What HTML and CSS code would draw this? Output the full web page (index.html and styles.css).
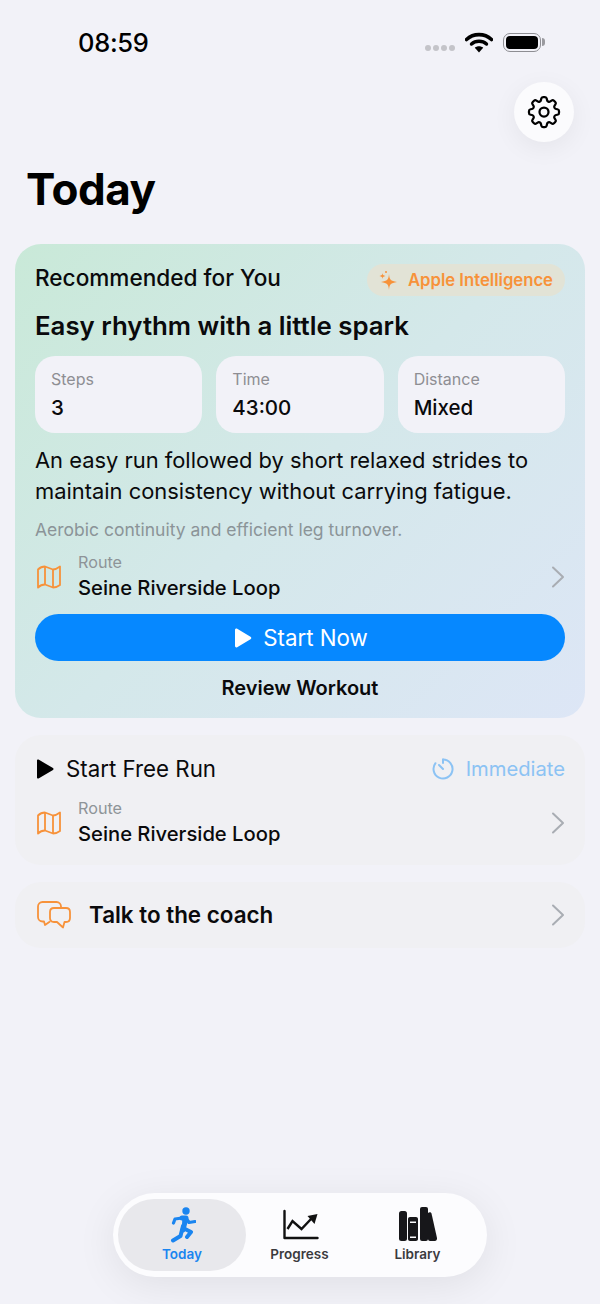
FILE: index.html
```html
<!DOCTYPE html>
<html lang="en">
<head>
  <meta charset="UTF-8" />
  <meta name="viewport" content="width=device-width, initial-scale=1.0" />
  <title>Today</title>
  <link rel="stylesheet" href="styles.css">
</head>
<body>
  <div class="status-bar">
    <span class="clock">08:59</span>
    <div class="status-icons">
      <div class="signal"><i></i><i></i><i></i><i></i></div>
      <svg class="wifi" width="28" height="21" viewBox="0 0 28 21">
        <path d="M1.5 7.5C8.5 1 19.5 1 26.5 7.5" fill="none" stroke="#000" stroke-width="3.6" stroke-linecap="round"/>
        <path d="M6.5 12C10.5 8.4 17.5 8.4 21.5 12" fill="none" stroke="#000" stroke-width="3.4" stroke-linecap="round"/>
        <path d="M14 20.5L9.8 15.8C12 13.8 16 13.8 18.2 15.8Z"/>
      </svg>
      <div class="battery"><div class="battery-fill"></div></div>
      <div class="battery-cap"></div>
    </div>
  </div>

  <div class="top-actions">
    <button class="settings-btn" type="button">
      <svg width="40" height="40" viewBox="0 0 24 24" fill="none" stroke="#000" stroke-width="1.35" stroke-linejoin="round">
        <path d="M10.343 3.94c.09-.542.56-.94 1.11-.94h1.093c.55 0 1.02.398 1.11.94l.149.894c.07.424.384.764.78.93.398.164.855.142 1.205-.108l.737-.527a1.125 1.125 0 0 1 1.45.12l.773.774c.39.389.44 1.002.12 1.45l-.527.737c-.25.35-.272.806-.107 1.204.165.397.505.71.93.78l.893.15c.543.09.94.559.94 1.109v1.094c0 .55-.397 1.02-.94 1.11l-.894.149c-.424.07-.764.383-.929.78-.165.398-.143.854.107 1.204l.527.738c.32.447.269 1.06-.12 1.45l-.774.773a1.125 1.125 0 0 1-1.449.12l-.738-.527c-.35-.25-.806-.272-1.203-.107-.398.165-.71.505-.781.929l-.149.894c-.09.542-.56.94-1.11.94h-1.094c-.55 0-1.019-.398-1.11-.94l-.148-.894c-.071-.424-.384-.764-.781-.93-.398-.164-.854-.142-1.204.108l-.738.527c-.447.32-1.06.269-1.45-.12l-.773-.774a1.125 1.125 0 0 1-.12-1.45l.527-.737c.25-.35.272-.806.108-1.204-.165-.397-.506-.71-.93-.78l-.894-.15c-.542-.09-.94-.56-.94-1.11v-1.094c0-.55.398-1.02.94-1.11l.894-.149c.424-.07.765-.383.93-.78.165-.398.143-.854-.108-1.204l-.526-.738a1.125 1.125 0 0 1 .12-1.45l.773-.773a1.125 1.125 0 0 1 1.45-.12l.737.527c.35.25.807.272 1.204.107.397-.165.71-.505.78-.929l.15-.894Z"/>
        <circle cx="12" cy="12" r="2.7"/>
      </svg>
    </button>
  </div>

  <h1>Today</h1>

  <main class="cards">
    <section class="card card-rec">
      <div class="rec-head">
        <h2>Recommended for You</h2>
        <div class="ai-badge">
          <svg width="18" height="20" viewBox="0 0 18 20" fill="#f7923a">
            <path d="M10 4C10.5 9.5 11.5 11 18 12C11.5 13 10.5 14.5 10 20C9.5 14.5 8.5 13 2 12C8.5 11 9.5 9.5 10 4Z"/>
            <path d="M3.5 3C3.7 5 4.2 5.5 6.5 6C4.2 6.5 3.7 7 3.5 9C3.3 7 2.8 6.5 .5 6C2.8 5.5 3.3 5 3.5 3Z"/>
            <circle cx="7" cy="2" r="1"/>
          </svg>
          <span>Apple Intelligence</span>
        </div>
      </div>
      <h3>Easy rhythm with a little spark</h3>
      <div class="stats">
        <div class="stat"><span class="stat-label">Steps</span><span class="stat-value">3</span></div>
        <div class="stat"><span class="stat-label">Time</span><span class="stat-value">43:00</span></div>
        <div class="stat"><span class="stat-label">Distance</span><span class="stat-value">Mixed</span></div>
      </div>
      <p class="desc">An easy run followed by short relaxed strides to maintain consistency without carrying fatigue.</p>
      <p class="focus">Aerobic continuity and efficient leg turnover.</p>
      <div class="route route-rec">
        <svg class="map-icon" width="28" height="26" viewBox="0 0 28 26" fill="none" stroke="#f7923a" stroke-width="1.8" stroke-linejoin="round">
          <path d="M3 5.5C5 3.5 7.5 2.5 10 2.5L18 5.5C20.5 5.5 23 4 25 2.5V21C23 22.5 20.5 23.5 18 23.5L10 20.5C7.5 20.5 5 21.5 3 23.5Z"/>
          <path d="M10 2.5V20.5M18 5.5V23.5"/>
        </svg>
        <div class="route-text">
          <span class="route-label">Route</span>
          <span class="route-name">Seine Riverside Loop</span>
        </div>
        <svg class="chevron" width="14" height="24" viewBox="0 0 14 24" fill="none" stroke="#a9adb3" stroke-width="2" stroke-linecap="round" stroke-linejoin="round"><path d="M2 2.5L12 12L2 21.5"/></svg>
      </div>
      <button class="start-btn" type="button">
        <svg width="18" height="20" viewBox="0 0 18 20" fill="#fff"><path d="M1 2C1 .8 2.2 .2 3.2 .8L16.5 8.7C17.5 9.3 17.5 10.7 16.5 11.3L3.2 19.2C2.2 19.8 1 19.2 1 18Z"/></svg>
        Start Now
      </button>
      <div class="review">Review Workout</div>
    </section>

    <section class="card card-free">
      <div class="free-head">
        <svg class="free-play" width="18" height="20" viewBox="0 0 18 20"><path d="M1 1.5C1 .7 1.8 .2 2.5 .6L17 9C17.7 9.4 17.7 10.6 17 11L2.5 19.4C1.8 19.8 1 19.3 1 18.5Z"/></svg>
        <span class="free-title">Start Free Run</span>
        <div class="immediate">
          <svg width="22" height="22" viewBox="0 0 22 22" fill="none" stroke="#8cc3f4" stroke-width="2" stroke-linecap="round"><path d="M11 1.5A9.5 9.5 0 1 1 3.5 5.2"/><path d="M11 1.5V5M7 7L11 11"/></svg>
          <span>Immediate</span>
        </div>
      </div>
      <div class="route route-free">
        <svg class="map-icon" width="28" height="26" viewBox="0 0 28 26" fill="none" stroke="#f7923a" stroke-width="1.8" stroke-linejoin="round">
          <path d="M3 5.5C5 3.5 7.5 2.5 10 2.5L18 5.5C20.5 5.5 23 4 25 2.5V21C23 22.5 20.5 23.5 18 23.5L10 20.5C7.5 20.5 5 21.5 3 23.5Z"/>
          <path d="M10 2.5V20.5M18 5.5V23.5"/>
        </svg>
        <div class="route-text">
          <span class="route-label">Route</span>
          <span class="route-name">Seine Riverside Loop</span>
        </div>
        <svg class="chevron" width="14" height="24" viewBox="0 0 14 24" fill="none" stroke="#a9adb3" stroke-width="2" stroke-linecap="round" stroke-linejoin="round"><path d="M2 2.5L12 12L2 21.5"/></svg>
      </div>
    </section>

    <section class="card card-coach">
      <svg class="coach-icon" width="34" height="28" viewBox="0 0 34 28" fill="none" stroke="#f7923a" stroke-width="1.8" stroke-linejoin="round">
        <path d="M24 7V5.5C24 3 22 1 19.5 1H5.500C3 1 1 3 1 5.5V16C1 18.5 3 20.5 5.5 20.5H7L8 24L13 20.5"/>
        <path d="M17 7H29C31.5 7 33 8.5 33 11V17C33 19.5 31.5 21 29 21H27.5L26 26.5L20 21H17C14.5 21 13 19.5 13 17V11C13 8.5 14.5 7 17 7Z"/>
      </svg>
      <span class="coach-title">Talk to the coach</span>
      <svg class="coach-chevron" width="14" height="24" viewBox="0 0 14 24" fill="none" stroke="#a9adb3" stroke-width="2" stroke-linecap="round" stroke-linejoin="round"><path d="M2 2.5L12 12L2 21.5"/></svg>
    </section>
  </main>

  <nav class="tab-bar">
    <div class="tab tab-active">
      <svg width="28" height="36" viewBox="0 0 28 36" fill="none" stroke="#1a85f0" stroke-linecap="round" stroke-linejoin="round">
        <circle cx="18" cy="4" r="3.7" fill="#1a85f0" stroke="none"/>
        <path d="M14 11H18L15 23" stroke-width="5" fill="#1a85f0"/>
        <path d="M14 11L7 12L5.5 16M18 11L21 15.5L27 14.5" stroke-width="3.2"/>
        <path d="M15 19L12.5 29L5 33.5M15 21L23 25L19 30" stroke-width="4"/>
      </svg>
      <span>Today</span>
    </div>
    <div class="tab">
      <svg width="38" height="36" viewBox="0 0 38 36" fill="none">
        <path d="M3.5 4V31H36.5" stroke="#111" stroke-width="2.4" stroke-linecap="round" stroke-linejoin="round"/>
        <path d="M6.5 22L11.5 14L20.5 22L30 12" stroke="#111" stroke-width="2.4"/>
        <path d="M26.5 9L36.5 7L33.5 17Z" fill="#111"/>
      </svg>
      <span>Progress</span>
    </div>
    <div class="tab">
      <svg width="38" height="36" viewBox="0 0 38 36" fill="#17171a">
        <rect x="0" y="4" width="8" height="30" rx="2.5"/>
        <path fill-rule="evenodd" d="M9 12C9 10.9 9.9 10 11 10H17C18.1 10 19 10.900 19 12V32C19 33.1 18.1 34 17 34H11C9.9 34 9 33.1 9 32ZM11 14.5V16H17V14.5ZM11 29.5V31H17V29.5Z"/>
        <rect x="21" y="0" width="8" height="34" rx="2"/>
        <path d="M29 6C30 5 32 5 32.5 6.5L38 31C38.3 33 37 34 36 34H31C30 34 29 33 29 32Z"/>
      </svg>
      <span>Library</span>
    </div>
  </nav>
</body>
</html>
```

FILE: styles.css
```css
* {
  box-sizing: border-box;
}

body {
  margin: 0;
  height: 1304px;
  font-family: 'Inter', 'Liberation Sans', sans-serif;
  background-color: #f2f2f8;
  color: #0a0a0c;
  display: flex;
  flex-direction: column;
  overflow: hidden;
}

/* status bar */
.status-bar {
  display: flex;
  justify-content: space-between;
  align-items: center;
  padding: 26px 55px 0 78px;
  height: 58px;
}

.clock {
  font-size: 25.5px;
  font-weight: 500;
  letter-spacing: -0.3px;
  color: #000;
}

.status-icons {
  display: flex;
  align-items: center;
}

.signal {
  display: flex;
  gap: 2px;
  margin: 12px 10px 0 0;
}

.signal i {
  width: 6px;
  height: 6px;
  border-radius: 50%;
  background-color: #c4c4c9;
}

.wifi {
  margin-right: 10px;
}

.battery {
  width: 38px;
  height: 19px;
  border: 1.5px solid #8e8e93;
  border-radius: 7px;
  padding: 2px;
}

.battery-fill {
  height: 100%;
  background-color: #000;
  border-radius: 4px;
}

.battery-cap {
  width: 3px;
  height: 8px;
  margin-left: 1px;
  background-color: #9a9a9f;
  border-radius: 0 3px 3px 0;
}

/* header */
.top-actions {
  display: flex;
  justify-content: flex-end;
  padding: 24px 26px 0 0;
}

.settings-btn {
  width: 60px;
  height: 60px;
  padding: 0;
  border: none;
  border-radius: 50%;
  background-color: #fbfbfd;
  box-shadow: 0 6px 26px rgba(0, 0, 0, 0.06);
  display: flex;
  align-items: center;
  justify-content: center;
}

h1 {
  margin: 19px 0 27px 26px;
  font-size: 44px;
  line-height: 56px;
  font-weight: 700;
  letter-spacing: -0.5px;
  color: #000;
}

/* cards */
.cards {
  display: flex;
  flex-direction: column;
  gap: 17px;
  padding: 0 15px;
}

.card {
  border-radius: 26px;
  background-color: #f0f0f3;
}

.card-rec {
  height: 474px;
  padding: 19px 20px 0;
  background: linear-gradient(135deg, #c9e9d8 0%, #d4e8ea 50%, #dde6f6 100%);
}

.rec-head {
  display: flex;
  justify-content: space-between;
  align-items: center;
  height: 33px;
}

h2 {
  margin: 0 0 4px;
  font-size: 22.6px;
  font-weight: 500;
}

.ai-badge {
  display: flex;
  align-items: center;
  gap: 11px;
  height: 32px;
  padding: 0 12px;
  border-radius: 16px;
  background-color: #e2e3d6;
  color: #f7923a;
  font-size: 16.7px;
  font-weight: 600;
}

h3 {
  margin: 13px 0;
  font-size: 25.8px;
  line-height: 34px;
  font-weight: 600;
}

.stats {
  display: grid;
  grid-template-columns: repeat(3, 1fr);
  gap: 14px;
}

.stat {
  height: 77px;
  padding: 13px 16px 0;
  border-radius: 20px;
  background-color: #f2f2f8;
  display: flex;
  flex-direction: column;
}

.stat-label {
  font-size: 16px;
  line-height: 20px;
  color: #8e8e93;
}

.stat-value {
  margin-top: 6px;
  font-size: 20.5px;
  line-height: 26px;
  font-weight: 500;
}

.desc {
  margin: 12px 0 0;
  font-size: 21.9px;
  line-height: 31px;
}

.focus {
  margin: 12px 0 0;
  font-size: 17.5px;
  line-height: 22px;
  color: #8b9498;
}

.route {
  display: flex;
  align-items: center;
}

.route-rec {
  margin-top: 10px;
  height: 50px;
}

.map-icon {
  margin: 1px 15px 0 0;
  flex-shrink: 0;
}

.chevron {
  margin-top: 1px;
  flex-shrink: 0;
}

.route-text {
  display: flex;
  flex-direction: column;
  flex: 1;
}

.route-label {
  font-size: 16.2px;
  line-height: 20px;
  color: #8e9498;
}

.route-name {
  margin-top: 3px;
  font-size: 20.2px;
  line-height: 25px;
  font-weight: 500;
}

.start-btn {
  width: 100%;
  height: 47px;
  margin-top: 13px;
  padding: 0 0 0 2px;
  border: none;
  border-radius: 24px;
  background-color: #0688ff;
  color: #fff;
  font-family: inherit;
  font-size: 22.3px;
  display: flex;
  align-items: center;
  justify-content: center;
  gap: 11px;
}

.review {
  margin-top: 14px;
  text-align: center;
  font-size: 20px;
  line-height: 26px;
  font-weight: 600;
}

.card-free {
  height: 130px;
  padding: 20px 20px 0;
}

.free-head {
  display: flex;
  align-items: center;
  height: 27px;
}

.free-play {
  margin-left: 1px;
}

.free-title {
  margin-left: 12px;
  flex: 1;
  font-size: 22.3px;
}

.immediate {
  display: flex;
  align-items: center;
  gap: 12px;
  font-size: 20.2px;
  color: #8cc3f4;
}

.route-free {
  margin-top: 15px;
  height: 50px;
}

.card-coach {
  height: 66px;
  padding: 0 20px;
  display: flex;
  align-items: center;
}

.coach-icon {
  margin-left: 2px;
  flex-shrink: 0;
}

.coach-title {
  margin: 0 0 2px 18px;
  flex: 1;
  font-size: 22.4px;
  font-weight: 600;
}

.coach-chevron {
  flex-shrink: 0;
}

/* tab bar */
.tab-bar {
  margin: auto auto 27px;
  width: 374px;
  height: 84px;
  padding: 6px 5px;
  border-radius: 42px;
  background-color: #fcfcfe;
  box-shadow: 0 8px 40px rgba(0, 0, 0, 0.08);
  display: grid;
  grid-template-columns: 128px 107px 129px;
}

.tab {
  display: flex;
  flex-direction: column;
  align-items: center;
  justify-content: flex-end;
  gap: 3px;
  padding-bottom: 9px;
  font-size: 13.5px;
  line-height: 16px;
  font-weight: 600;
  color: #3a3a3d;
}

.tab-active {
  border-radius: 36px;
  background-color: #e8e8ec;
  color: #1a85f0;
}
```
